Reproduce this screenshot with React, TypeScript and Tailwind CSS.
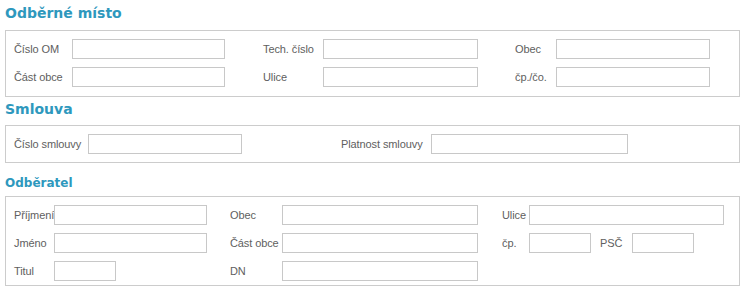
import React from "react";

type Cell =
  | { t: "label"; text: string; w: string }
  | { t: "input"; w: string }
  | { t: "gap"; w: string };

const L = (text: string, w: string): Cell => ({ t: "label", text, w });
const I = (w: string): Cell => ({ t: "input", w });
const G = (w: string): Cell => ({ t: "gap", w });

function Row({ cells }: { cells: Cell[] }) {
  return (
    <div className="flex h-5 items-center">
      {cells.map((c, i) => {
        if (c.t === "label")
          return (
            <span key={i} className={`${c.w} shrink-0 whitespace-nowrap font-normal leading-5 tracking-[-0.1px]`}>
              {c.text}
            </span>
          );
        if (c.t === "input")
          return (
            <input
              key={i}
              type="text"
              className={`${c.w} h-5 shrink-0 border border-[#c8c8c8] bg-white outline-none`}
            />
          );
        return <span key={i} className={`${c.w} shrink-0`} />;
      })}
    </div>
  );
}

export default function App() {
  return (
    <div
      className="h-[296px] w-[753px] bg-white text-[11px] text-[#606060]"
      style={{ fontFamily: '"Liberation Sans", Arial, sans-serif' }}
    >
      <h2
        className="ml-[5px] pt-1 text-[14px] font-bold leading-[18px] text-[#2e98bd]"
        style={{ fontFamily: '"DejaVu Sans", Verdana, sans-serif' }}
      >
        Odběrné místo
      </h2>
      <div className="ml-[5px] mt-2 flex w-[735px] flex-col gap-2 border border-[#cccccc] pb-[9px] pl-2 pt-2">
        <Row
          cells={[
            L("Číslo OM", "w-[58px]"),
            I("w-[153px]"),
            G("w-[38px]"),
            L("Tech. číslo", "w-[60px]"),
            I("w-[155px]"),
            G("w-[37px]"),
            L("Obec", "w-[41px]"),
            I("w-[154px]"),
          ]}
        />
        <Row
          cells={[
            L("Část obce", "w-[58px]"),
            I("w-[153px]"),
            G("w-[38px]"),
            L("Ulice", "w-[60px]"),
            I("w-[155px]"),
            G("w-[37px]"),
            L("čp./čo.", "w-[41px]"),
            I("w-[154px]"),
          ]}
        />
      </div>

      <h2
        className="ml-[5px] mt-[3px] text-[14px] font-bold leading-[18px] text-[#2e98bd]"
        style={{ fontFamily: '"DejaVu Sans", Verdana, sans-serif' }}
      >
        Smlouva
      </h2>
      <div className="ml-[5px] mt-[7px] flex w-[735px] flex-col border border-[#cccccc] pb-[8px] pl-2 pt-2">
        <Row
          cells={[
            L("Číslo smlouvy", "w-[74px]"),
            I("w-[154px]"),
            G("w-[99px]"),
            L("Platnost smlouvy", "w-[90px]"),
            I("w-[197px]"),
          ]}
        />
      </div>

      <h3
        className="ml-[5px] mt-3 text-[12px] font-bold leading-4 text-[#2e98bd]"
        style={{ fontFamily: '"DejaVu Sans", Verdana, sans-serif' }}
      >
        Odběratel
      </h3>
      <div className="ml-[5px] mt-[5px] flex w-[735px] flex-col gap-2 border border-[#cccccc] pb-1 pl-2 pt-2">
        <Row
          cells={[
            L("Příjmení", "w-[40px]"),
            I("w-[153px]"),
            G("w-[23px]"),
            L("Obec", "w-[52px]"),
            I("w-[196px]"),
            G("w-[24px]"),
            L("Ulice", "w-[27px]"),
            I("w-[195px]"),
          ]}
        />
        <Row
          cells={[
            L("Jméno", "w-[40px]"),
            I("w-[153px]"),
            G("w-[23px]"),
            L("Část obce", "w-[52px]"),
            I("w-[196px]"),
            G("w-[24px]"),
            L("čp.", "w-[27px]"),
            I("w-[62px]"),
            G("w-[9px]"),
            L("PSČ", "w-[32px]"),
            I("w-[62px]"),
          ]}
        />
        <Row
          cells={[
            L("Titul", "w-[40px]"),
            I("w-[62px]"),
            G("w-[114px]"),
            L("DN", "w-[52px]"),
            I("w-[196px]"),
          ]}
        />
      </div>
    </div>
  );
}
